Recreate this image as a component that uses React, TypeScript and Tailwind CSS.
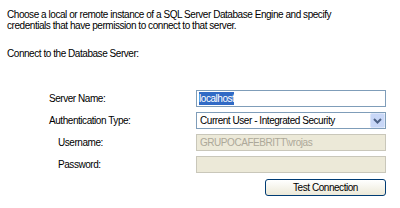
import React from 'react';

const rows = [
  { label: 'Server Name:', indent: false },
  { label: 'Authentication Type:', indent: false },
  { label: 'Username:', indent: true },
  { label: 'Password:', indent: true },
];

function Chevron() {
  return (
    <svg width="9" height="6" viewBox="0 0 9 6">
      <path d="M1 1l3.5 3.5L8 1" fill="none" stroke="#4d6185" strokeWidth={2} />
    </svg>
  );
}

export default function App() {
  return (
    <div
      className="w-[400px] h-[208px] bg-white text-[10px] leading-[11px] tracking-[-0.45px] text-black overflow-hidden whitespace-nowrap"
      style={{ fontFamily: '"Liberation Sans", Arial, sans-serif' }}
    >
      <div className="pl-[7px] pt-[9px]">
        <p>Choose a local or remote instance of a SQL Server Database Engine and specify</p>
        <p>credentials that have permission to connect to that server.</p>
      </div>

      <p className="pl-[7px] mt-[17px]">Connect to the Database Server:</p>

      <div className="flex mt-[31px]">
        <div className="w-[196px] flex flex-col gap-[5px]">
          {rows.map((r) => (
            <div
              key={r.label}
              className={`h-[17px] flex items-center ${r.indent ? 'pl-[58px]' : 'pl-[49px]'}`}
            >
              {r.label}
            </div>
          ))}
        </div>
        <div className="w-[190px] flex flex-col gap-[5px]">
          <div className="h-[17px] border border-[#7f9db9] bg-white flex items-center px-[2px]">
            <span className="bg-[#316ac5] text-white leading-[13px]">localhost</span>
          </div>
          <div className="h-[17px] border border-[#7f9db9] bg-white flex items-center pl-[3px]">
            <span className="flex-1">Current User - Integrated Security</span>
            <div className="w-[15px] h-[15px] bg-[#c8d7f7] border border-[#dce6fa] rounded-[2px] flex items-center justify-center">
              <Chevron />
            </div>
          </div>
          <div className="h-[17px] border border-[#c9c7ba] bg-[#ece9d8] flex items-center px-[3px] text-[#aca899]">
            GRUPOCAFEBRITT\vrojas
          </div>
          <div className="h-[17px] border border-[#c9c7ba] bg-[#ece9d8]" />
          <div className="flex justify-end mt-px">
            <button className="w-[121px] h-[17px] border border-[#003c74] rounded-[3px] bg-gradient-to-b from-white to-[#ece9d8] text-black leading-[11px] tracking-[-0.45px]">
              Test Connection
            </button>
          </div>
        </div>
      </div>
    </div>
  );
}
